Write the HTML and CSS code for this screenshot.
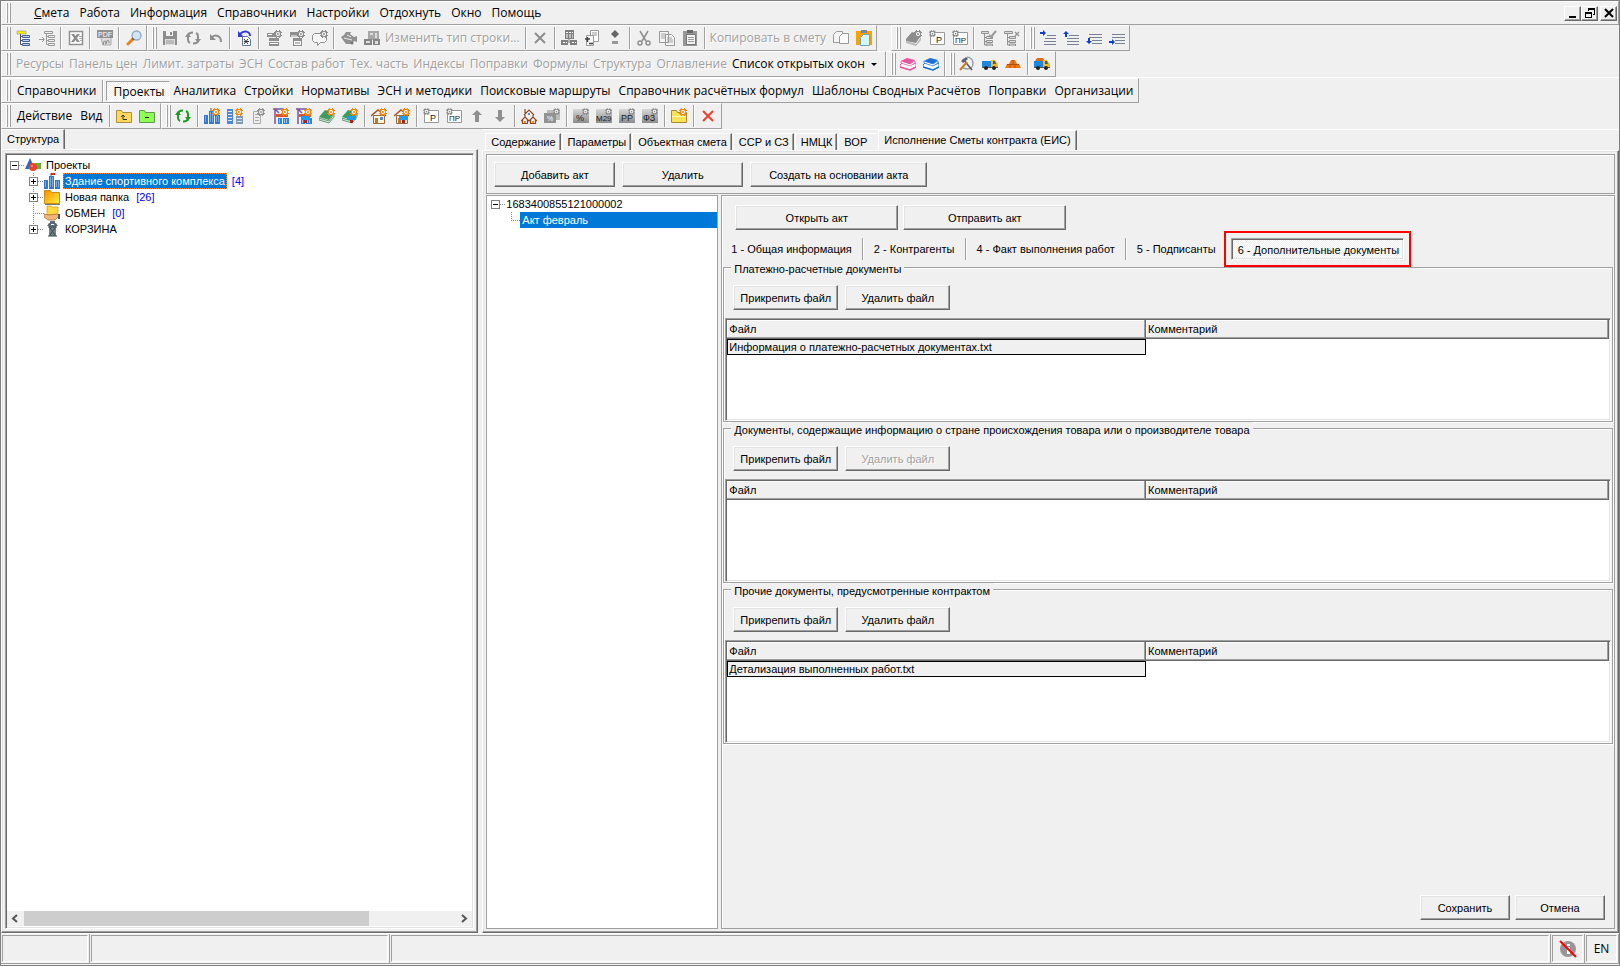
FILE: index.html
```html
<!DOCTYPE html>
<html lang="ru">

<head>
  <meta charset="UTF-8">
  <meta name="viewport" content="width=device-width, initial-scale=1.0">
  <title>Смета</title>
  <link rel="stylesheet" href="styles.css">
</head>

<body>

  <svg class="sprite" aria-hidden="true">
    <defs>
      <linearGradient id="gold" x1="0" y1="0" x2="1" y2="1">
        <stop offset="0" stop-color="#ff8a00"/><stop offset="1" stop-color="#fff23a"/>
      </linearGradient>
      <linearGradient id="silver" x1="0" y1="0" x2="0" y2="1">
        <stop offset="0" stop-color="#d8d8d8"/><stop offset="1" stop-color="#8c8c8c"/>
      </linearGradient>
    </defs>
    <symbol id="gear" viewBox="0 0 8 8">
      <path d="M1 1h1V0h1v1h2V0h1v1h1v1h1v1H7v2h1v1H7v1H6v1H5V7H3v1H2V7H1V6H0V5h1V3H0V2h1z" fill="currentColor"/>
      <circle cx="4" cy="4" r="2" fill="#fff"/><circle cx="4" cy="4" r="1" fill="currentColor"/>
    </symbol>
    <symbol id="tree" viewBox="0 0 16 16">
      <path d="M1 1h9v3H1z" fill="#f6ee00" stroke="#999" stroke-width=".6"/>
      <path d="M4.500 4v10.500H7M4.500 6.500H7M4.500 10.500H7" fill="none" stroke="#555"/>
      <path d="M6.500 5.500h7v2h-7zM6.500 9.500h7v2h-7zM6.500 13.500h7v2h-7z" fill="#b9d3f4" stroke="#42618c"/>
    </symbol>
    <symbol id="tree-add" viewBox="0 0 16 16">
      <path d="M5.500 1.500h8v2h-8zM9.500 5.500h6v2h-6zM9.500 9.500h6v2h-6zM9.500 13.500h6v2h-6zM7.500 4v10.500h2M7.500 6.500h2M7.500 10.500h2M0 9.500h5M3 7l2.500 2.500L3 12" fill="none" stroke="#999"/>
    </symbol>
    <symbol id="xls" viewBox="0 0 16 16">
      <path d="M1.500 1.500h13v13h-13z" fill="#fff" stroke="#909090" stroke-width="1.500"/>
      <path d="M3 4h3l6 8H9zM9 4h3L6 12H3z" fill="#8e8e8e"/><path d="M11 6.500h3M11 8.500h3M12 10.500h2" stroke="#aaa"/>
    </symbol>
    <symbol id="search" viewBox="0 0 16 16">
      <path d="M2 14l5-5" stroke="#e58325" stroke-width="3" stroke-linecap="round"/>
      <circle cx="10.500" cy="5.500" r="4.500" fill="#cde5fb" stroke="#9ba6b7" stroke-width="1.300"/>
      <path d="M6 8l2 2" stroke="#8b5724" stroke-width="1.500"/>
    </symbol>
    <symbol id="save" viewBox="0 0 16 16">
      <path d="M1 1h14v14H1z" fill="#8d8d8d"/><path d="M4 1h7v5H4z" fill="#efefef"/><path d="M8 2h2v3H8z" fill="#8d8d8d"/><path d="M3 9h10v6H3z" fill="#dcdcdc"/><path d="M4 11h8M4 13h8" stroke="#999"/>
    </symbol>
    <symbol id="refresh" viewBox="0 0 16 16">
      <path d="M3 10V6c0-2 2-3.500 5-3.500M13 6v4c0 2-2 3.500-5 3.500M11 3c1 .5 2 1.500 2 3M5 13c-1-.5-2-1.500-2-3" fill="none" stroke="currentColor" stroke-width="2"/>
      <path d="M0 7l3-4 3 4zM10 9h6l-3 4z" fill="currentColor"/>
    </symbol>
    <symbol id="undo" viewBox="0 0 16 16">
      <path d="M4 7c4-3 9-1 9 5" fill="none" stroke="#8d8d8d" stroke-width="2"/><path d="M2 4v6h6z" fill="#8d8d8d"/>
    </symbol>
    <symbol id="undo-doc" viewBox="0 0 16 16">
      <path d="M3 4c4-4 10-3 10 2" fill="none" stroke="#343bd2" stroke-width="2"/><path d="M1 1v6h6z" fill="#343bd2"/>
      <path d="M5.500 6.500h5l3 3v6h-8z" fill="#fff" stroke="#60779b"/><path d="M7 9l4 5M11 9l-4 5M7 11.500h5" stroke="#333"/>
    </symbol>
    <symbol id="row-add" viewBox="0 0 16 16">
      <path d="M1 3h13v4H1zM3 8h10v3H3zM3 12h10v4H3z" fill="#8e8e8e"/><path d="M2 4.500h4M4 13.500h8" stroke="#fff"/>
      <use href="#gear" x="8" y="0" width="8" height="8"/>
    </symbol>
    <symbol id="row-sub" viewBox="0 0 16 16">
      <path d="M1 2h13v5H1zM4 8h9v8H4z" fill="#8e8e8e"/><path d="M2 6h7M5.500 11.500h6v3h-6z" stroke="#fff" fill="#bbb"/>
      <use href="#gear" x="8" y="0" width="8" height="8"/>
    </symbol>
    <symbol id="bubble" viewBox="0 0 16 16">
      <path d="M2.500 3.500h10l2 2v5l-2 2h-4l-3 3v-3h-3l-2-2v-5z" fill="#f5f5f5" stroke="#8e8e8e"/>
      <use href="#gear" x="8" y="0" width="8" height="8"/>
    </symbol>
    <symbol id="bird" viewBox="0 0 16 16">
      <path d="M0 7l3-2 2-3h5l-1 2 4 3 3-1v6l-3-1-2 3H5L2 10z" fill="#919191"/><path d="M3 8l8 2M6 5l4 2" stroke="#eee"/><circle cx="11" cy="13" r="1.500" fill="#777"/>
    </symbol>
    <symbol id="blocks" viewBox="0 0 16 16">
      <path d="M4 1h11v9H4z" fill="#a8a8a8"/><path d="M0 9h8v6H0zM9 9h7v6H9z" fill="#858585"/><path d="M6 3h3v2H6zM11 3h2v5h-2zM2 11h4v2H2zM11 11h3v3h-3z" fill="#ddd"/>
    </symbol>
    <symbol id="cross" viewBox="0 0 16 16">
      <path d="M3 3l10 10M13 3L3 13" stroke="currentColor" stroke-width="2"/>
    </symbol>
    <symbol id="calc" viewBox="0 0 16 16">
      <path d="M4 0h9v9H4zM0 10h7v5H0zM9 10h7v5H9z" fill="#7f7f7f"/><path d="M5 2.500h7M5 5h7M5 7h7M2 12.500h4M11 12.500h4" stroke="#fff" stroke-dasharray="2 1"/><path d="M8 9v4" stroke="#777"/>
    </symbol>
    <symbol id="doc-plus" viewBox="0 0 16 16">
      <path d="M6.500.500h8v11h-8z" fill="#fff" stroke="#999"/><path d="M8 3h5M8 5h5" stroke="#999"/>
      <path d="M2.500 5.500h7v10h-7z" fill="#f7f7f7" stroke="#999"/><path d="M1 9h5M3.500 7v5M5 13.500h4" stroke="#444" stroke-width="1.500"/>
    </symbol>
    <symbol id="plus-minus" viewBox="0 0 16 16">
      <path d="M8 0l4 4-4 4-4-4z" fill="#666"/><path d="M5 11h6v3H5z" fill="#999"/>
    </symbol>
    <symbol id="cut" viewBox="0 0 16 16">
      <path d="M4 1l6 10M12 1L6 11" stroke="#8e8e8e" stroke-width="1.500"/><circle cx="4" cy="13" r="2" fill="none" stroke="#8e8e8e" stroke-width="1.500"/><circle cx="12" cy="13" r="2" fill="none" stroke="#8e8e8e" stroke-width="1.500"/>
    </symbol>
    <symbol id="copy" viewBox="0 0 16 16">
      <path d="M.500 1.500h9v11h-9zM6.500 4.500h6l3 3v8h-9z" fill="#f4f4f4" stroke="#999"/><path d="M2 4h5M2 6h4M2 8h4M8 8h5M8 10h6M8 12h6" stroke="#a5a5a5"/>
    </symbol>
    <symbol id="pages" viewBox="0 0 16 16">
      <path d="M3.500 1.500h6v11h-9v-8z" fill="#f4f4f4" stroke="#999"/><path d="M9.500 3.500h6v10h-9v-7z" fill="#fafafa" stroke="#999"/>
    </symbol>
    <symbol id="paste-off" viewBox="0 0 16 16">
      <path d="M1 1h14v15H1z" fill="#979797"/><path d="M5 0h6v3H5z" fill="#666"/><path d="M4.500 4.500h9v10h-9z" fill="#f2f2f2" stroke="#777"/><path d="M6 7.500h6M6 9.500h6M6 11.500h6" stroke="#999"/>
    </symbol>
    <symbol id="paste" viewBox="0 0 16 16">
      <path d="M0 1h16v14H0z" fill="#f6a300"/><path d="M5 0h6v3H5z" fill="#7b8794"/><path d="M7.500 4.500h6v11h-9v-8z" fill="#d5f5ff" stroke="#6ba6bb"/>
    </symbol>
    <symbol id="book-off" viewBox="0 0 16 16">
      <path d="M0 9l6-7 9 3-5 8-10-2z" fill="#8c8c8c"/><path d="M0 11l10 3 5-7v3l-5 6L0 13z" fill="#b9b9b9"/><use href="#gear" x="8" y="0" width="8" height="8"/>
    </symbol>
    <symbol id="page" viewBox="0 0 16 16">
      <path d="M1.500 2.500h14v12h-14z" fill="#fff" stroke="#999"/><use href="#gear" x="0" y="0" width="7" height="7"/>
    </symbol>
    <symbol id="plate" viewBox="0 0 16 16">
      <path d="M0 1h16v14H0z" fill="url(#silver)"/><use href="#gear" x="9" width="7" height="7"/>
    </symbol>
    <symbol id="tree-check" viewBox="0 0 16 16">
      <path d="M.500 1.500h7v2h-7zM5.500 6.500h6v2h-6zM5.500 10.500h6v2h-6zM5.500 14h6v2h-6zM3.500 4v11h2M3.500 7.500h2M3.500 11.500h2" fill="#ddd" stroke="#929292"/><path d="M8 5l2 2 5-6" stroke="#999" stroke-width="2" fill="none"/>
    </symbol>
    <symbol id="tree-x" viewBox="0 0 16 16">
      <path d="M.500 1.500h8v2h-8zM5.500 6.500h6v2h-6zM5.500 10.500h6v2h-6zM5.500 14h6v2h-6zM3.500 4v11h2M3.500 7.500h2M3.500 11.500h2" fill="#ddd" stroke="#929292"/><path d="M11 2l4 4M15 2l-4 4" stroke="#999" stroke-width="1.500"/>
    </symbol>
    <symbol id="ind-right-top" viewBox="0 0 16 16">
      <path d="M7 5.500h9M5 8.500h11M4 11.500h12M4 14.500h12" stroke="#7a8094"/><path d="M0 2h3V0l3 3-3 3V4H0z" fill="#0a3fd0"/>
    </symbol>
    <symbol id="ind-up" viewBox="0 0 16 16">
      <path d="M6 5.500h10M4 8.500h12M4 11.500h12M4 14.500h12" stroke="#7a8094"/><path d="M0 4l3-3 3 3H4v3H2V4z" fill="#0a3fd0"/>
    </symbol>
    <symbol id="ind-down" viewBox="0 0 16 16">
      <path d="M3 4.500h13M3 7.500h13M6 10.500h10M6 13.500h10" stroke="#7a8094"/><path d="M2 8h2v3h2l-3 3-3-3h2z" fill="#0a3fd0"/>
    </symbol>
    <symbol id="ind-right" viewBox="0 0 16 16">
      <path d="M3 4.500h13M3 7.500h13M6 10.500h10M6 13.500h10" stroke="#7a8094"/><path d="M0 11h3V9l3 3-3 3v-2H0z" fill="#0a3fd0"/>
    </symbol>
    <symbol id="books" viewBox="0 0 16 16">
      <path d="M0 9l2-2 9 2 5-2v4l-6 3-10-3z" fill="#fff" stroke="currentColor"/>
      <path d="M0 11l10 3 6-3" stroke="currentColor" stroke-width="1.500" fill="none"/>
      <path d="M1 5l9 3 5-3v2l-5 3L1 7z" fill="#fff" stroke="currentColor" stroke-width=".7"/><path d="M1 5l6-3 8 2-5 4z" fill="currentColor"/>
    </symbol>
    <symbol id="hammer" viewBox="0 0 16 16">
      <path d="M8 1c8 1 8 12 0 12l-4-1" fill="none" stroke="#93a0ab" stroke-width="1.500"/><path d="M4 3l9 11" stroke="#555" stroke-width="1.500"/><path d="M8 6l-7 8" stroke="#c77c2b" stroke-width="2"/><path d="M2 5l5-4 2 2-5 4z" fill="#5c656d"/>
    </symbol>
    <symbol id="truck" viewBox="0 0 16 16">
      <path d="M0 5h9v6H0z" fill="#1d86dd"/><path d="M9 4h4l3 4v4H9z" fill="#f7b52c"/><path d="M11 5h2l1 3h-3z" fill="#2b5d91"/><path d="M0 11h16v1H0z" fill="#555"/><circle cx="4" cy="12" r="2" fill="#222"/><circle cx="12" cy="12" r="2" fill="#222"/>
    </symbol>
    <symbol id="truck-load" viewBox="0 0 16 16">
      <path d="M1 5l2-3h6l2 3z" fill="#df6e19"/><use href="#truck" width="16" height="16"/>
    </symbol>
    <symbol id="bricks" viewBox="0 0 16 16">
      <path d="M0 12l2-4h2l2-4h4l2 4h2l2 4z" fill="#f07813"/><path d="M2 8.500h12M5 12V9M10 12V9M8 8V4" stroke="#b14f0a"/>
    </symbol>
    <symbol id="folder-up" viewBox="0 0 16 16">
      <path d="M.500 2.500h5l1 2h9v10H.500z" fill="#ffd75a" stroke="#b08d3c"/><path d="M7 7v4.500h4M5 9l2-2 2 2" stroke="#333" fill="none"/>
    </symbol>
    <symbol id="folder-minus" viewBox="0 0 16 16">
      <path d="M.500 2.500h5l1 2h9v10H.500z" fill="#8cff55" stroke="#5f9a50"/><path d="M6 9.500h4" stroke="#222"/>
    </symbol>
    <symbol id="building" viewBox="0 0 16 16">
      <path d="M0 7h4v9H0zM5 3h5v13H5zM11 7h5v9h-5z" fill="#3478cd"/>
      <path d="M1 9h2M1 11h2M1 13h2M6 5h3M6 7h3M6 9h3M6 11h3M6 13h3M12 9h3M12 11h3M12 13h3" stroke="#b7dcff" stroke-dasharray="1 1"/><path d="M7 0v3" stroke="#555"/>
    </symbol>
    <symbol id="b-house" viewBox="0 0 16 16">
      <use href="#building" width="16" height="16"/><use href="#gear" x="8" width="8" height="8" color="#ee8a12"/>
    </symbol>
    <symbol id="b-flag" viewBox="0 0 16 16">
      <use href="#building" width="16" height="16"/><path d="M7 0h4v2H7z" fill="#e02222"/>
    </symbol>
    <symbol id="b-two" viewBox="0 0 16 16">
      <path d="M0 1h6v15H0z" fill="#4c85dc"/><path d="M9 8h7v8H9z" fill="#8296b5"/><path d="M1 3.500h4M1 6.500h4M1 9.500h4M1 12.500h4M10 10.500h5M10 13.500h5" stroke="#d9eaff"/><use href="#gear" x="8" width="8" height="8" color="#ee8a12"/>
    </symbol>
    <symbol id="b-off" viewBox="0 0 16 16">
      <path d="M3.500 3.500h7v12h-7z" fill="#eee" stroke="#aaa"/><path d="M5 6.500h4M5 9.500h4M5 12.500h4" stroke="#aaa"/><use href="#gear" x="7" width="8" height="8"/>
    </symbol>
    <symbol id="crane" viewBox="0 0 16 16">
      <path d="M2 16V1M0 1h10M2 1l4 4" stroke="#79539b" fill="none" stroke-width="1.500"/><path d="M3 6h12v3H3z" fill="#df552b"/><path d="M5 10h4v6H5zM10 10h6v6h-6z" fill="#2c82e0"/><path d="M6 12h2M6 14h2M11 12h4M11 14h4" stroke="#fff" stroke-dasharray="1 1"/><use href="#gear" x="8" width="8" height="8" color="#ee8a12"/>
    </symbol>
    <symbol id="brush" viewBox="0 0 16 16">
      <path d="M5 8h9v4H5z" fill="#1d9cf0"/><path d="M8 12h3v3H8z" fill="#a22"/>
    </symbol>
    <symbol id="crane-brush" viewBox="0 0 16 16">
      <use href="#crane" width="16" height="16"/><use href="#brush" width="16" height="16"/>
    </symbol>
    <symbol id="book-green" viewBox="0 0 16 16">
      <path d="M0 9l6-7 9 3-5 7z" fill="#3d9a61"/><path d="M0 10l10 3 5-7v3l-5 6L0 12z" fill="#d5e6d9" stroke="#357c50" stroke-width=".7"/><use href="#gear" x="8" width="8" height="8" color="#ee8a12"/>
    </symbol>
    <symbol id="book-brush" viewBox="0 0 16 16">
      <use href="#book-green" width="16" height="16"/><use href="#brush" width="16" height="16"/>
    </symbol>
    <symbol id="home" viewBox="0 0 16 16">
      <path d="M2.500 7.500h11v8h-11z" fill="#fff6dd" stroke="#9a6b3c"/><path d="M0 8l7-6 8 6" fill="none" stroke="#a35723" stroke-width="1.500"/><path d="M4 10h3v5H4z" fill="#b97931"/><path d="M9 9h3v3H9z" fill="#4d8ad1"/><use href="#gear" x="8" width="8" height="8" color="#ee8a12"/>
    </symbol>
    <symbol id="home-brush" viewBox="0 0 16 16">
      <use href="#home" width="16" height="16"/><use href="#brush" width="16" height="16"/>
    </symbol>
    <symbol id="arrow-up" viewBox="0 0 16 16">
      <path d="M8 2l5 5h-3v7H6V7H3z" fill="#8f8f8f"/>
    </symbol>
    <symbol id="arrow-down" viewBox="0 0 16 16">
      <path d="M8 14l5-5h-3V2H6v7H3z" fill="#8f8f8f"/>
    </symbol>
    <symbol id="houses" viewBox="0 0 16 16">
      <path d="M3 7l5-5 5 5M4 7v3M12 7v3M0 13l4-4 4 4M8 13l4-4 4 4M1.500 12v3.500h5V12M9.500 12v3.500h5V12M4 1v4" fill="none" stroke="#8f4a25" stroke-width="1.200"/><path d="M3 13h2v2H3zM11 13h2v2h-2z" fill="#e9922b"/><path d="M7 5h2v2H7z" fill="#5c92d0"/>
    </symbol>
    <symbol id="plates" viewBox="0 0 16 16">
      <path d="M3 2h13v10H3z" fill="#bbb"/><path d="M0 5h12v10H0z" fill="#929292"/><use href="#gear" x="9" width="7" height="7"/>
    </symbol>
    <symbol id="folder-new" viewBox="0 0 16 16">
      <path d="M.500 2.500h5l1 2h9v10H.500z" fill="#ffe352" stroke="#a98a34"/><path d="M1 8.500h14" stroke="#fff7b8"/><use href="#gear" x="8" width="8" height="8" color="#ee8a12"/>
    </symbol>
    <symbol id="folder-gold" viewBox="0 0 16 16">
      <path d="M.500 1.500h6l1 2h8v11H.500z" fill="url(#gold)" stroke="#c98f16"/><path d="M1 15.500h15" stroke="#777"/>
    </symbol>
    <symbol id="shapes" viewBox="0 0 16 16">
      <path d="M0 12L5 1l5 11z" fill="#3468b4"/><path d="M10 6h6v6h-6z" fill="#6ab02e"/><circle cx="8" cy="10" r="4" fill="#e9422f"/><circle cx="7" cy="9" r="1" fill="#ff9c86"/>
    </symbol>
    <symbol id="share" viewBox="0 0 16 16">
      <path d="M3 1h4l1 1h6v8H3z" fill="#ffd83c" stroke="#c9991c" stroke-width=".7"/><path d="M0 9l5 1 8-1 2 2-4 4H4l-4-3z" fill="#f1b67c" stroke="#a9672d" stroke-width=".7"/><path d="M14 9h2v5h-2z" fill="#555"/>
    </symbol>
    <symbol id="bin" viewBox="0 0 16 16">
      <path d="M5 5h7v10H5z" fill="#76838c"/><path d="M3 5l2-3h1V0h5v2h1l2 3z" fill="#5c6a74"/><path d="M6 7l5 7M11 7l-5 7M4 6h9M4 15h9" stroke="#34424a"/><path d="M7 3h3v1H7z" fill="#fff"/>
    </symbol>
    <symbol id="notify-off" viewBox="0 0 18 18">
      <circle cx="9" cy="9" r="8" fill="#969696"/><path d="M8 4h3v2H8zM8 7h3v7H8z" fill="#fff"/><path d="M1 1l16 16" stroke="#f00" stroke-width="2"/>
    </symbol>
  </svg>

  <header class="bars">
    <div class="bar bar--menu">
      <span class="grip"></span>
      <nav class="menu">
        <a href="#"><u>С</u>мета</a>
        <a href="#">Работа</a>
        <a href="#">Информация</a>
        <a href="#">Справочники</a>
        <a href="#">Настройки</a>
        <a href="#">Отдохнуть</a>
        <a href="#">Окно</a>
        <a href="#">Помощь</a>
      </nav>
      <div class="window-buttons">
        <button aria-label="Свернуть"><svg viewBox="0 0 12 10"><path d="M2 8h7v2H2z"/></svg></button>
        <button aria-label="Восстановить"><svg viewBox="0 0 12 10"><path d="M4 0h7v7H9V6h1V2H5v1H4zM1 4h7v6H1zM2 6v3h5V6z" fill-rule="evenodd"/></svg></button>
        <button class="close" aria-label="Закрыть"><svg viewBox="0 0 12 10"><path d="M2 1l8 8M10 1L2 9" stroke="#000" stroke-width="2"/></svg></button>
      </div>
    </div>

    <div class="row">
      <div class="bar">
        <span class="grip"></span>
        <button class="tool"><svg><use href="#tree"/></svg></button>
        <button class="tool"><svg><use href="#tree-add"/></svg></button>
        <span class="sep"></span>
        <button class="tool"><svg><use href="#xls"/></svg></button>
        <span class="sep"></span>
        <button class="tool"><svg viewBox="0 0 16 16"><path d="M3 5h11v10H6z" fill="#ddd" stroke="#aaa"/><path d="M6 15c1-6 3-5 3-1 1-5 3-5 3-1" fill="none" stroke="#888"/><path d="M0 0h16v8H0z" fill="#909090"/><text class="glyph glyph--light" x="1" y="7">PDF</text></svg></button>
        <span class="sep"></span>
        <button class="tool"><svg><use href="#search"/></svg></button>
      </div>
      <div class="bar">
        <span class="grip"></span>
        <button class="tool"><svg><use href="#save"/></svg></button>
        <button class="tool"><svg><use href="#refresh"/></svg></button>
        <button class="tool"><svg><use href="#undo"/></svg></button>
        <span class="sep"></span>
        <button class="tool"><svg><use href="#undo-doc"/></svg></button>
        <span class="sep"></span>
        <button class="tool"><svg><use href="#row-add"/></svg></button>
        <button class="tool"><svg><use href="#row-sub"/></svg></button>
        <button class="tool"><svg><use href="#bubble"/></svg></button>
        <span class="sep"></span>
        <button class="tool"><svg><use href="#bird"/></svg></button>
        <button class="tool"><svg><use href="#blocks"/></svg></button>
        <button class="text-tool" disabled>Изменить тип строки...</button>
        <span class="sep"></span>
        <button class="tool"><svg><use href="#cross"/></svg></button>
        <span class="sep"></span>
        <button class="tool"><svg><use href="#calc"/></svg></button>
        <button class="tool"><svg><use href="#doc-plus"/></svg></button>
        <button class="tool"><svg><use href="#plus-minus"/></svg></button>
        <span class="sep"></span>
        <button class="tool"><svg><use href="#cut"/></svg></button>
        <button class="tool"><svg><use href="#copy"/></svg></button>
        <button class="tool"><svg><use href="#paste-off"/></svg></button>
        <span class="sep"></span>
        <button class="text-tool" disabled>Копировать в смету</button>
        <button class="tool"><svg><use href="#pages"/></svg></button>
        <button class="tool"><svg><use href="#paste"/></svg></button>
      </div>
      <div class="bar bar--apart">
        <span class="grip"></span>
        <button class="tool"><svg><use href="#book-off"/></svg></button>
        <button class="tool"><svg viewBox="0 0 16 16"><use href="#page"/><text class="glyph glyph--large" x="7" y="13">Р</text></svg></button>
        <button class="tool"><svg viewBox="0 0 16 16"><use href="#page"/><text class="glyph" x="3" y="13">ПР</text></svg></button>
        <span class="sep"></span>
        <button class="tool"><svg><use href="#tree-check"/></svg></button>
        <button class="tool"><svg><use href="#tree-x"/></svg></button>
      </div>
      <div class="bar">
        <span class="grip"></span>
        <button class="tool"><svg><use href="#ind-right-top"/></svg></button>
        <button class="tool"><svg><use href="#ind-up"/></svg></button>
        <button class="tool"><svg><use href="#ind-down"/></svg></button>
        <button class="tool"><svg><use href="#ind-right"/></svg></button>
      </div>
    </div>

    <div class="row">
      <div class="bar">
        <span class="grip"></span>
        <div class="links">
          <button class="text-tool" disabled>Ресурсы</button>
          <button class="text-tool" disabled>Панель цен</button>
          <button class="text-tool" disabled>Лимит. затраты</button>
          <button class="text-tool" disabled>ЭСН</button>
          <button class="text-tool" disabled>Состав работ</button>
          <button class="text-tool" disabled>Тех. часть</button>
          <button class="text-tool" disabled>Индексы</button>
          <button class="text-tool" disabled>Поправки</button>
          <button class="text-tool" disabled>Формулы</button>
          <button class="text-tool" disabled>Структура</button>
          <button class="text-tool" disabled>Оглавление</button>
          <button class="text-tool text-tool--menu">Список открытых окон</button>
        </div>
      </div>
      <div class="bar">
        <span class="grip"></span>
        <button class="tool pink"><svg><use href="#books"/></svg></button>
        <button class="tool blue"><svg><use href="#books"/></svg></button>
      </div>
      <div class="bar">
        <span class="grip"></span>
        <button class="tool"><svg><use href="#hammer"/></svg></button>
        <button class="tool"><svg><use href="#truck"/></svg></button>
        <button class="tool"><svg><use href="#bricks"/></svg></button>
        <span class="sep"></span>
        <button class="tool"><svg><use href="#truck-load"/></svg></button>
      </div>
    </div>

    <div class="row row--line">
      <div class="bar">
        <span class="grip"></span>
        <nav class="menu">
          <a href="#">Справочники</a>
          <span class="sep"></span>
          <a href="#" class="pressed">Проекты</a>
          <a href="#">Аналитика</a>
          <a href="#">Стройки</a>
          <a href="#">Нормативы</a>
          <a href="#">ЭСН и методики</a>
          <a href="#">Поисковые маршруты</a>
          <a href="#">Справочник расчётных формул</a>
          <a href="#">Шаблоны Сводных Расчётов</a>
          <a href="#">Поправки</a>
          <a href="#">Организации</a>
        </nav>
      </div>
    </div>

    <div class="row">
      <div class="bar">
        <span class="grip"></span>
        <nav class="menu">
          <a href="#">Действие</a>
          <a href="#">Вид</a>
        </nav>
        <span class="sep"></span>
        <button class="tool"><svg><use href="#folder-up"/></svg></button>
        <button class="tool"><svg><use href="#folder-minus"/></svg></button>
      </div>
      <div class="bar">
        <span class="grip"></span>
        <button class="tool green"><svg><use href="#refresh"/></svg></button>
        <span class="sep"></span>
        <button class="tool"><svg><use href="#b-house"/></svg></button>
        <button class="tool"><svg><use href="#b-two"/></svg></button>
        <button class="tool"><svg><use href="#b-off"/></svg></button>
        <button class="tool"><svg><use href="#crane"/></svg></button>
        <button class="tool"><svg><use href="#crane-brush"/></svg></button>
        <button class="tool"><svg><use href="#book-green"/></svg></button>
        <button class="tool"><svg><use href="#book-brush"/></svg></button>
        <span class="sep"></span>
        <button class="tool"><svg><use href="#home"/></svg></button>
        <button class="tool"><svg><use href="#home-brush"/></svg></button>
        <span class="sep"></span>
        <button class="tool"><svg viewBox="0 0 16 16"><use href="#page"/><text class="glyph glyph--large" x="7" y="13">Р</text></svg></button>
        <button class="tool"><svg viewBox="0 0 16 16"><use href="#page"/><text class="glyph" x="3" y="13">ПР</text></svg></button>
        <button class="tool"><svg><use href="#arrow-up"/></svg></button>
        <button class="tool"><svg><use href="#arrow-down"/></svg></button>
        <span class="sep"></span>
        <button class="tool"><svg><use href="#houses"/></svg></button>
        <button class="tool"><svg viewBox="0 0 16 16"><use href="#plates"/><text class="glyph glyph--light" x="3" y="13">%</text></svg></button>
        <span class="sep"></span>
        <button class="tool"><svg viewBox="0 0 16 16"><use href="#plate"/><text class="glyph glyph--large" x="3" y="13">%</text></svg></button>
        <button class="tool"><svg viewBox="0 0 16 16"><use href="#plate"/><text class="glyph" x="0" y="13">М29</text></svg></button>
        <button class="tool"><svg viewBox="0 0 16 16"><use href="#plate"/><text class="glyph glyph--large" x="2" y="13">РР</text></svg></button>
        <button class="tool"><svg viewBox="0 0 16 16"><use href="#plate"/><text class="glyph glyph--large" x="1" y="13">ФЗ</text></svg></button>
        <span class="sep"></span>
        <button class="tool"><svg><use href="#folder-new"/></svg></button>
        <span class="sep"></span>
        <button class="tool red"><svg><use href="#cross"/></svg></button>
      </div>
    </div>
  </header>

  <main class="workspace">

    <section class="structure">
      <div class="tabs">
        <button class="tab tab--active">Структура</button>
      </div>
      <div class="page">
        <div class="tree-box">
          <ul class="tree">
            <li>
              <div class="node"><span class="toggle toggle--open"></span><span class="dots"></span><svg><use href="#shapes"/></svg><span class="node__name">Проекты</span></div>
              <ul class="tree__children">
                <li class="node"><span class="toggle"></span><span class="dots"></span><svg><use href="#b-flag"/></svg><span class="node__name node__name--selected">Здание спортивного комплекса</span><span class="count">[4]</span></li>
                <li class="node"><span class="toggle"></span><span class="dots"></span><svg><use href="#folder-gold"/></svg><span class="node__name">Новая папка</span><span class="count">[26]</span></li>
                <li class="node"><span class="dots dots--long"></span><svg><use href="#share"/></svg><span class="node__name">ОБМЕН</span><span class="count">[0]</span></li>
                <li class="node"><span class="toggle"></span><span class="dots"></span><svg><use href="#bin"/></svg><span class="node__name">КОРЗИНА</span></li>
              </ul>
            </li>
          </ul>
          <div class="scrollbar">
            <svg viewBox="0 0 17 15"><path d="M10 4L6 7.500l4 3.500" /></svg>
            <div class="scrollbar__track"><div class="scrollbar__thumb"></div></div>
            <svg viewBox="0 0 17 15"><path d="M7 4l4 3.500L7 11" /></svg>
          </div>
        </div>
      </div>
    </section>

    <section class="estimate">
      <div class="tabs tabs--estimate">
        <button class="tab">Содержание</button>
        <button class="tab">Параметры</button>
        <button class="tab">Объектная смета</button>
        <button class="tab">ССР и СЗ</button>
        <button class="tab">НМЦК</button>
        <button class="tab">ВОР</button>
        <button class="tab tab--active">Исполнение Сметы контракта (ЕИС)</button>
      </div>

      <div class="page page--estimate">
        <div class="panel actions">
          <button class="btn btn--act">Добавить акт</button>
          <button class="btn btn--act">Удалить</button>
          <button class="btn btn--base">Создать на основании акта</button>
        </div>

        <div class="contract">
          <ul class="acts">
            <li class="acts__contract"><span class="toggle toggle--open"></span><span class="dots"></span>1683400855121000002</li>
            <li class="acts__act"><span class="elbow"></span><span class="acts__name">Акт февраль</span></li>
          </ul>

          <div class="panel act">
            <div class="act__buttons">
              <button class="btn btn--wide">Открыть акт</button>
              <button class="btn btn--wide">Отправить акт</button>
            </div>

            <div class="steps">
              <button class="step">1 - Общая информация</button>
              <button class="step">2 - Контрагенты</button>
              <button class="step">4 - Факт выполнения работ</button>
              <button class="step">5 - Подписанты</button>
              <div class="marked">
                <button class="step step--active">6 - Дополнительные документы</button>
              </div>
            </div>

            <fieldset class="docs">
              <legend>Платежно-расчетные документы</legend>
              <div class="docs__buttons">
                <button class="btn btn--file">Прикрепить файл</button>
                <button class="btn btn--file">Удалить файл</button>
              </div>
              <div class="grid">
                <table>
                  <thead><tr><th>Файл</th><th>Комментарий</th></tr></thead>
                  <tbody><tr><td class="current">Информация о платежно-расчетных документах.txt</td><td></td></tr></tbody>
                </table>
              </div>
            </fieldset>

            <fieldset class="docs">
              <legend>Документы, содержащие информацию о стране происхождения товара или о производителе товара</legend>
              <div class="docs__buttons">
                <button class="btn btn--file">Прикрепить файл</button>
                <button class="btn btn--file" disabled>Удалить файл</button>
              </div>
              <div class="grid">
                <table>
                  <thead><tr><th>Файл</th><th>Комментарий</th></tr></thead>
                </table>
              </div>
            </fieldset>

            <fieldset class="docs">
              <legend>Прочие документы, предусмотренные контрактом</legend>
              <div class="docs__buttons">
                <button class="btn btn--file">Прикрепить файл</button>
                <button class="btn btn--file">Удалить файл</button>
              </div>
              <div class="grid">
                <table>
                  <thead><tr><th>Файл</th><th>Комментарий</th></tr></thead>
                  <tbody><tr><td class="current">Детализация выполненных работ.txt</td><td></td></tr></tbody>
                </table>
              </div>
            </fieldset>

            <div class="act__footer">
              <button class="btn btn--dialog">Сохранить</button>
              <button class="btn btn--dialog">Отмена</button>
            </div>
          </div>
        </div>
      </div>
    </section>

  </main>

  <footer class="status">
    <div class="status__cell status__cell--small"><div></div></div>
    <div class="status__cell status__cell--medium"><div></div></div>
    <div class="status__cell status__cell--rest"><div></div></div>
    <div class="status__cell status__cell--icon"><div><svg><use href="#notify-off"/></svg></div></div>
    <div class="status__cell status__cell--icon"><div>EN</div></div>
  </footer>

</body>

</html>
```

FILE: styles.css
```css
:root {
  --face: #f0f0f0;
  --light: #e3e3e3;
  --shadow: #a0a0a0;
  --dark: #696969;
  --select: #0078d7;
}

* {
  box-sizing: border-box;
}

body {
  margin: 0;
  min-height: 100vh;
  display: flex;
  flex-direction: column;
  border: 1px solid #808080;
  background-color: var(--face);
  color: #000;
  font: 11px/14px "Liberation Sans", sans-serif;
}

button {
  padding: 0;
  border: 0;
  background: none;
  color: inherit;
  font: inherit;
  white-space: nowrap;
}

ul {
  margin: 0;
  padding: 0;
  list-style: none;
}

.sprite {
  position: absolute;
  width: 0;
  height: 0;
}

/* toolbars */

.bars,
.status {
  font: 12px/16px "Open Sans", "Noto Sans", sans-serif;
}

.row {
  display: flex;
  height: 26px;
}

.row--line {
  border-top: 1px solid #fff;
}

.bar {
  display: flex;
  align-items: center;
  padding: 0 1px 0 4px;
  border: 1px solid var(--shadow);
  border-top-color: #fff;
  border-left-color: #fff;
}

.bar--menu {
  height: 24px;
}

.bar--apart {
  margin-left: 14px;
}

.grip {
  align-self: stretch;
  flex: none;
  width: 6px;
  margin: 1px 0;
  background: linear-gradient(to right, #fff 1px, var(--shadow) 1px 2px, var(--face) 2px 3px, #fff 3px 4px, var(--shadow) 4px 5px, var(--face) 5px);
}

.menu {
  display: flex;
  align-items: center;
  margin-left: 1px;
}

.menu a {
  padding: 0 4px;
  color: #000;
  text-decoration: none;
  white-space: nowrap;
}

.bar--menu .menu {
  margin-left: 17px;
}

.bar--menu .menu a {
  padding: 0 5px;
}

.menu .pressed {
  padding: 2px 4px 0 6px;
  border: 1px solid #fff;
  border-top-color: var(--shadow);
  border-left-color: var(--shadow);
  background: repeating-conic-gradient(#fff 0 25%, #f0f0f0 0 50%) 0 0 / 2px 2px;
}

.links {
  display: flex;
  margin-left: 2px;
}

.sep {
  flex: none;
  align-self: stretch;
  width: 2px;
  min-height: 22px;
  margin: 1px 2px;
  border-left: 1px solid var(--shadow);
  border-right: 1px solid #fff;
}

.tool {
  display: flex;
  justify-content: center;
  flex: none;
  width: 23px;
  color: #8d8d8d;
}

.tool svg,
.node svg {
  width: 16px;
  height: 16px;
  flex: none;
}

.glyph {
  fill: #222;
  font: 8px "Liberation Sans", sans-serif;
}

.glyph--large {
  font-size: 9px;
}

.glyph--light {
  fill: #fff;
  font-size: 7px;
}

.pink { color: #e5559b; }
.blue { color: #1b70d8; }
.green { color: #1f9a26; }
.red { color: #f04030; }

.text-tool {
  padding: 0 3px 0 2px;
}

.text-tool:disabled,
.btn:disabled {
  color: var(--shadow);
  text-shadow: 1px 1px #fff;
}

.text-tool--menu::after {
  content: "";
  display: inline-block;
  margin: 0 4px 2px 6px;
  border: 3px solid transparent;
  border-top-color: #000;
  border-bottom: 0;
}

.window-buttons {
  display: flex;
  margin-left: auto;
}

.window-buttons button {
  display: flex;
  align-items: center;
  justify-content: center;
  width: 17px;
  height: 15px;
  border: 1px solid var(--dark);
  border-top-color: #fff;
  border-left-color: #fff;
  box-shadow: inset -1px -1px var(--shadow);
}

.window-buttons .close {
  margin-left: 2px;
}

.window-buttons svg {
  width: 12px;
  height: 10px;
}

/* workspace */

.workspace {
  flex: 1;
  display: flex;
  gap: 4px;
}

.structure {
  flex: none;
  width: 29.5%;
  display: flex;
  flex-direction: column;
}

.estimate {
  flex: 1;
  min-width: 0;
  display: flex;
  flex-direction: column;
  border-top: 1px solid #fff;
}

.tabs {
  display: flex;
  align-items: flex-end;
  height: 20px;
}

.tabs--estimate {
  padding-left: 3px;
}

.tab {
  height: 17px;
  padding: 0 4px 0 5px;
  border: 1px solid var(--dark);
  border-left-color: #fff;
  border-top-color: #fff;
  border-bottom: 0;
  box-shadow: inset -1px 0 var(--shadow);
}

.tab + .tab {
  margin-left: 1px;
}

.tab--active {
  height: 20px;
  padding: 0 5px 1px;
}

.tab:has(+ .tab--active) {
  padding-right: 9px;
  border-right-color: var(--face);
  box-shadow: none;
}

.page {
  flex: 1;
  display: flex;
  flex-direction: column;
  padding: 3px;
  border: 1px solid var(--dark);
  border-top-color: #fff;
  border-left-color: #fff;
  box-shadow: inset -1px -1px var(--shadow), inset 1px 1px var(--light);
}

.tree-box {
  flex: 1;
  display: flex;
  flex-direction: column;
  border: 1px solid #fff;
  border-top-color: var(--shadow);
  border-left-color: var(--shadow);
  box-shadow: inset 1px 1px var(--dark), inset -1px -1px var(--light);
  background-color: #fff;
}

.tree {
  flex: 1;
  padding: 3px 4px 0;
}

.tree__children {
  padding-left: 19px;
  background: repeating-linear-gradient(#888 0 1px, transparent 1px 2px) 23px 0 / 1px calc(100% - 8px) no-repeat;
}

.node {
  display: flex;
  align-items: center;
  height: 16px;
  white-space: nowrap;
}

.toggle {
  flex: none;
  width: 9px;
  height: 9px;
  border: 1px solid #808080;
  background: linear-gradient(#000, #000) 1px 3px / 5px 1px no-repeat, linear-gradient(#000, #000) 3px 1px / 1px 5px no-repeat, #fff;
}

.toggle--open {
  background: linear-gradient(#000, #000) 1px 3px / 5px 1px no-repeat, #fff;
}

.dots {
  flex: none;
  width: 6px;
  height: 1px;
  background: repeating-linear-gradient(to right, #888 0 1px, transparent 1px 2px);
}

.dots--long {
  width: 11px;
  margin-left: 4px;
}

.node__name {
  margin-left: 3px;
  padding: 0 2px;
  line-height: 16px;
}

.node__name--selected {
  outline: 1px dotted #ff8728;
  outline-offset: -1px;
  background-color: var(--select);
  color: #fff;
}

.count {
  margin-left: 5px;
  color: #00f;
}

.scrollbar {
  display: flex;
  height: 15px;
  margin: 0 1px 2px;
  background-color: var(--face);
}

.scrollbar svg {
  width: 17px;
  height: 15px;
  fill: none;
  stroke: #555;
  stroke-width: 2;
}

.scrollbar__track {
  flex: 1;
}

.scrollbar__thumb {
  width: 80%;
  height: 100%;
  background-color: #cdcdcd;
}

/* estimate page */

.page--estimate {
  gap: 1px;
}

.panel {
  border: 1px solid var(--shadow);
  box-shadow: inset 1px 1px #fff;
}

.actions {
  display: flex;
  gap: 7px;
  padding: 7px 7px 6px;
}

.btn {
  height: 25px;
  border: 1px solid var(--dark);
  border-top-color: #fff;
  border-left-color: #fff;
  box-shadow: inset -1px -1px var(--shadow), inset 1px 1px var(--light);
}

.btn--act { width: 121px; }
.btn--base { width: 177px; }
.btn--wide { width: 163px; }
.btn--file { width: 105px; }
.btn--dialog { width: 90px; }

.contract {
  flex: 1;
  display: flex;
  gap: 3px;
}

.acts {
  flex: none;
  width: 232px;
  border: 1px solid var(--shadow);
  background-color: #fff;
}

.acts li {
  display: flex;
  align-items: center;
  height: 16px;
}

.acts__contract {
  padding-left: 4px;
}

.elbow {
  align-self: flex-start;
  width: 9px;
  height: 9px;
  margin-left: 24px;
  border: 1px dotted #888;
  border-top: 0;
  border-right: 0;
}

.acts__name {
  flex: 1;
  padding-left: 2px;
  line-height: 16px;
  background-color: var(--select);
  color: #fff;
}

.act {
  flex: 1;
  min-width: 0;
  display: flex;
  flex-direction: column;
  padding: 9px 1px 8px;
}

.act__buttons {
  display: flex;
  gap: 5px;
  padding-left: 12px;
}

.steps {
  display: flex;
  align-items: center;
  height: 36px;
  margin-top: 1px;
  padding-left: 8px;
}

.step {
  height: 22px;
  margin-right: 10px;
}

.step + .step {
  padding-left: 11px;
  border-left: 1px solid var(--shadow);
  box-shadow: inset 1px 0 #fff;
}

.steps > .step:nth-child(4) {
  margin-right: 8px;
}

.marked {
  height: 36px;
  padding: 5px;
  border: 2px solid #f00;
}

.step--active {
  margin: 0;
  padding: 1px 4px 0 6px;
  border: 1px solid #fff;
  border-top-color: var(--shadow);
  border-left-color: var(--shadow);
  box-shadow: inset 1px 1px var(--dark), inset -1px -1px var(--light);
  background: repeating-conic-gradient(#fff 0 25%, #f0f0f0 0 50%) 0 0 / 2px 2px;
}

.docs {
  min-width: 0;
  height: 161px;
  margin: 0;
  padding: 12px 1px 0;
  border: 1px solid var(--shadow);
  box-shadow: 1px 1px #fff, inset 1px 1px #fff;
}

.steps + .docs {
  margin-top: -6px;
}

.docs legend {
  height: 12px;
  margin-left: 6px;
  padding: 0 3px;
  background-color: var(--face);
  line-height: 16px;
}

.docs__buttons {
  display: flex;
  gap: 7px;
  padding-left: 8px;
}

.grid {
  height: 103px;
  margin-top: 8px;
  border: 1px solid #fff;
  border-top-color: var(--shadow);
  border-left-color: var(--shadow);
  box-shadow: inset 1px 1px var(--dark), inset -1px -1px var(--light);
  padding: 1px;
  background-color: #fff;
}

.grid table {
  width: 100%;
  table-layout: fixed;
  border-spacing: 0;
}

.grid th,
.grid td {
  padding: 0 2px;
  font-weight: normal;
  text-align: left;
}

.grid th {
  height: 19px;
  border: 1px solid var(--dark);
  border-top: 0;
  border-left: 0;
  background-color: var(--face);
  box-shadow: inset -1px -1px var(--shadow), inset 1px 1px #fff;
}

.grid th:first-child {
  width: 47.5%;
}

.grid td {
  height: 16px;
}

.grid .current {
  padding-left: 1px;
  border: 1px solid #000;
  background-color: var(--face);
}

.act__footer {
  display: flex;
  justify-content: flex-end;
  gap: 5px;
  margin-top: auto;
  padding-right: 8px;
}

/* status bar */

.status {
  display: flex;
  height: 32px;
  border-top: 1px solid #fff;
}

.status__cell {
  height: 30px;
  padding: 1px;
  border-right: 1px solid var(--shadow);
  border-bottom: 1px solid var(--shadow);
}

.status__cell > div {
  display: flex;
  align-items: center;
  justify-content: center;
  height: 100%;
  border: 1px solid #fff;
  border-top-color: var(--shadow);
  border-left-color: var(--shadow);
}

.status__cell svg {
  width: 18px;
  height: 18px;
}

.status__cell--small { width: 89px; }
.status__cell--medium { width: 300px; }
.status__cell--rest { flex: 1; }
.status__cell--icon { width: 34px; }
```
